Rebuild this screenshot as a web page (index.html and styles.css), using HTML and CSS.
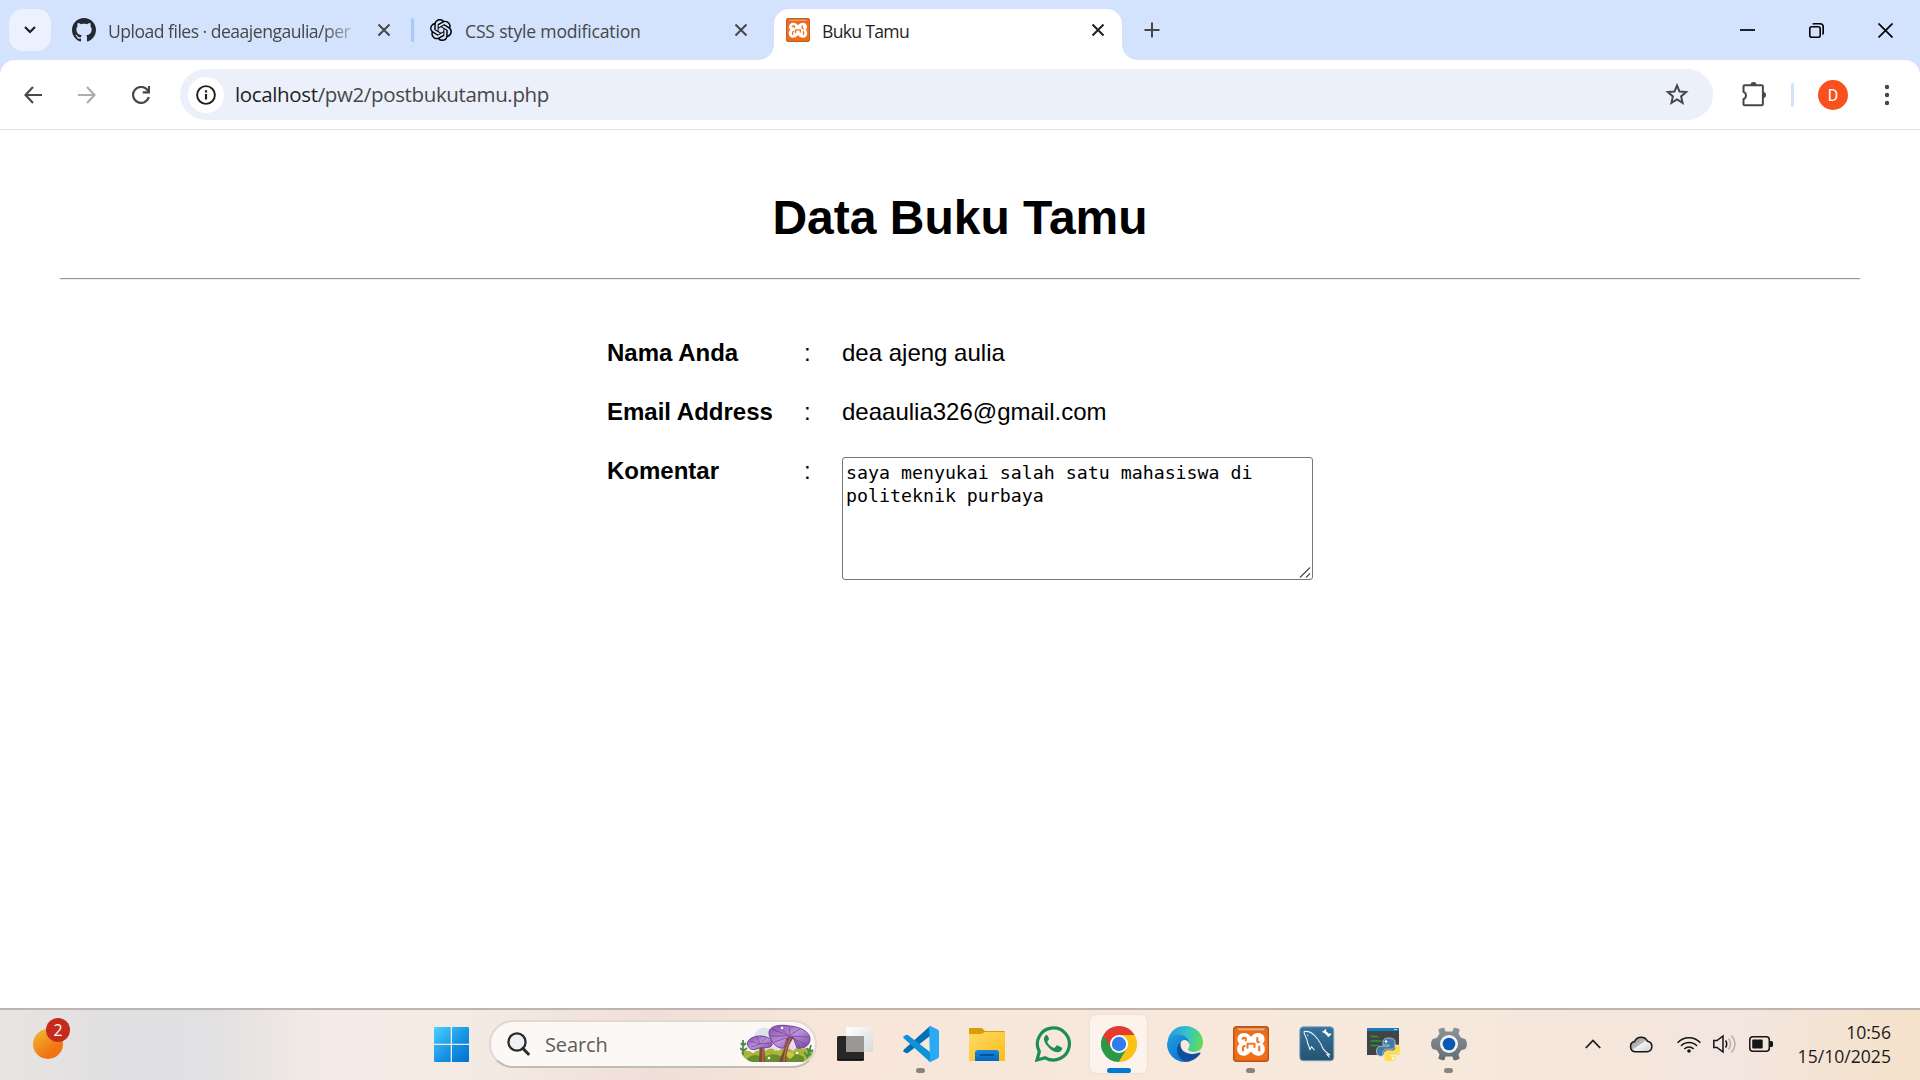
FILE: index.html
```html
<!DOCTYPE html>
<html lang="id">
<head>
<meta charset="utf-8">
<title>Buku Tamu</title>
<link rel="stylesheet" href="styles.css">
</head>
<body>
<svg width="0" height="0" class="defs" aria-hidden="true">
  <defs>
    <linearGradient id="orange" x1="0" y1="0" x2="0" y2="1"><stop offset="0" stop-color="#dc6a1c"/><stop offset=".5" stop-color="#fa7320"/><stop offset="1" stop-color="#ef6a15"/></linearGradient>
    <symbol id="xampp" viewBox="0 0 36 36">
      <rect x=".7" y=".7" width="34.6" height="34.6" rx="2.5" fill="url(#orange)" stroke="#b9541a" stroke-width="1.4"/>
      <path d="M4 2.6h28l-2 1.6H6z" fill="#f4b282"/>
      <path d="M11 7c3 0 5 1.300 7 3.800C20 8.300 22 7 25 7c4 0 6.500 2.500 6.500 6 0 2-.8 3.500-2 4.800 1.500 1.300 2.300 3 2.300 5.200 0 4-2.500 6.700-6.300 6.700-3.200 0-5.700-1.500-7.500-4.200-1.800 2.700-4.300 4.200-7.500 4.200C6.700 29.700 4.200 27 4.200 23c0-2.200.8-3.900 2.300-5.200-1.200-1.300-2-2.800-2-4.800 0-3.500 2.500-6 6.500-6z" fill="#fff"/>
      <path d="M9.500 12.800q1.300-1.600 3.200-.6v2.200M10 24.500v-2.800q0-1.700 1.700-1.700M14.500 17.800h7M21.500 17.800v3.200M24.300 12v2.700q0 1.500 1.500 1.500M26.200 20.500v4M14.500 17.800v4" fill="none" stroke="#f27421" stroke-width="2.100" stroke-linecap="round"/>
    </symbol>
    <symbol id="x" viewBox="0 0 16 16"><path d="M2.500 2.500l11 11M13.500 2.500l-11 11" fill="none" stroke="currentColor" stroke-width="2"/></symbol>
  </defs>
</svg>

<header class="tabstrip">
  <div class="tab-search"><svg width="14" height="10" viewBox="0 0 14 10"><path d="M2 2l5 5 5-5" fill="none" stroke="#1f1f1f" stroke-width="2.200"/></svg></div>
  <div class="tab tab-first">
    <svg width="24" height="24" viewBox="0 0 16 16"><path fill="#24292f" d="M8 0C3.580 0 0 3.580 0 8c0 3.540 2.290 6.530 5.470 7.590.4.070.55-.17.55-.38 0-.19-.01-.82-.01-1.490-2.010.37-2.530-.49-2.690-.94-.09-.23-.48-.94-.82-1.130-.28-.15-.68-.52-.01-.53.63-.01 1.080.58 1.230.82.72 1.210 1.870.87 2.330.66.070-.52.28-.87.51-1.070-1.780-.2-3.640-.89-3.640-3.950 0-.87.31-1.590.82-2.150-.08-.2-.36-1.020.08-2.120 0 0 .67-.21 2.200.82.64-.18 1.320-.27 2-.27s1.360.09 2 .27c1.530-1.040 2.200-.82 2.200-.82.44 1.100.16 1.920.08 2.120.51.56.82 1.270.82 2.150 0 3.070-1.870 3.750-3.650 3.950.29.25.54.73.54 1.480 0 1.070-.01 1.930-.01 2.200 0 .21.15.46.55.38A8.010 8.010 0 0 0 16 8c0-4.420-3.580-8-8-8z"/></svg>
    <span class="tab-title fade">Upload files · deaajengaulia/per</span>
    <svg class="close" width="16" height="16"><use href="#x"/></svg>
  </div>
  <i class="tab-sep"></i>
  <div class="tab tab-second">
    <svg width="22" height="22" viewBox="0 0 24 24"><path fill="#000" d="M22.282 9.821a5.985 5.985 0 0 0-.516-4.910 6.046 6.046 0 0 0-6.510-2.900A6.065 6.065 0 0 0 4.981 4.182a5.985 5.985 0 0 0-3.998 2.900 6.046 6.046 0 0 0 .743 7.097 5.980 5.980 0 0 0 .51 4.911 6.051 6.051 0 0 0 6.515 2.900A5.985 5.985 0 0 0 13.260 24a6.056 6.056 0 0 0 5.772-4.206 5.990 5.990 0 0 0 3.998-2.900 6.056 6.056 0 0 0-.748-7.073zm-9.022 12.608a4.476 4.476 0 0 1-2.876-1.041l.141-.081 4.779-2.758a.795.795 0 0 0 .392-.681v-6.737l2.020 1.169a.071.071 0 0 1 .038.052v5.583a4.504 4.504 0 0 1-4.494 4.494zM3.600 18.304a4.471 4.471 0 0 1-.535-3.014l.142.085 4.783 2.759a.771.771 0 0 0 .78 0l5.843-3.369v2.332a.08.08 0 0 1-.033.062L9.740 19.950a4.500 4.500 0 0 1-6.140-1.646zM2.340 7.896a4.485 4.485 0 0 1 2.366-1.973V11.600a.766.766 0 0 0 .388.676l5.814 3.355-2.020 1.168a.076.076 0 0 1-.071 0l-4.830-2.786A4.504 4.504 0 0 1 2.340 7.872zm16.597 3.855l-5.833-3.387L15.119 7.200a.076.076 0 0 1 .071 0l4.830 2.791a4.494 4.494 0 0 1-.676 8.105v-5.678a.79.79 0 0 0-.407-.667zm2.010-3.023l-.141-.085-4.774-2.782a.776.776 0 0 0-.785 0L9.409 9.230V6.897a.066.066 0 0 1 .028-.061l4.830-2.787a4.500 4.500 0 0 1 6.680 4.660zM8.307 12.863l-2.020-1.164a.08.08 0 0 1-.038-.057V6.075a4.500 4.500 0 0 1 7.375-3.453l-.142.080L8.704 5.460a.795.795 0 0 0-.393.681zm1.097-2.365l2.602-1.500 2.607 1.500v2.999l-2.597 1.500-2.607-1.500z"/></svg>
    <span class="tab-title">CSS style modification</span>
    <svg class="close" width="16" height="16"><use href="#x"/></svg>
  </div>
  <div class="tab tab-active">
    <svg width="24" height="24"><use href="#xampp"/></svg>
    <span class="tab-title">Buku Tamu</span>
    <svg class="close" width="16" height="16"><use href="#x"/></svg>
  </div>
  <svg class="new-tab" width="16" height="16" viewBox="0 0 16 16"><path d="M8 .5v15M.5 8h15" stroke="#474747" stroke-width="2"/></svg>
  <div class="window-controls">
    <svg width="15" height="15" viewBox="0 0 15 15"><path d="M0 7h15" stroke="#000" stroke-width="1.700"/></svg>
    <svg width="15" height="15" viewBox="0 0 15 15" fill="none" stroke="#000" stroke-width="1.600"><rect x=".8" y="3.800" width="10.400" height="10.400" rx="2"/><path d="M3.600 1.200C4 .9 4.700.8 5.500.8H11a3.200 3.200 0 0 1 3.200 3.200v5.500c0 .8-.2 1.500-.7 2"/></svg>
    <svg width="15" height="15" viewBox="0 0 15 15"><path d="M.5.5l14 14M14.500.5l-14 14" stroke="#000" stroke-width="1.700"/></svg>
  </div>
</header>

<nav class="toolbar">
  <div class="nav-buttons">
    <svg width="18" height="18" viewBox="0 0 18 18" fill="none" stroke="#474747" stroke-width="2.100"><path d="M18 9H1.500M9 1L1.500 9 9 17"/></svg>
    <svg width="18" height="18" viewBox="0 0 18 18" fill="none" stroke="#adadad" stroke-width="2.100"><path d="M0 9h16.500M9 1l7.500 8L9 17"/></svg>
    <svg width="18" height="18" viewBox="0 0 18 18" fill="none" stroke="#474747" stroke-width="2.200"><path d="M16.800 11A8 8 0 1 1 15 3.500l1.800 1.900M17 0v6.300h-6.300"/></svg>
  </div>
  <div class="omnibox">
    <span class="site-info"><svg width="20" height="20" viewBox="0 0 20 20"><circle cx="10" cy="10" r="8.900" fill="none" stroke="#1f1f1f" stroke-width="1.900"/><path d="M10 9v5.500M10 5.300v2.200" stroke="#1f1f1f" stroke-width="2.200"/></svg></span>
    <span class="url"><b>localhost</b>/pw2/postbukutamu.php</span>
    <svg width="24" height="23" viewBox="0 0 24 23"><path d="M12 2.500l2.500 6.100 6.600.5-5 4.300 1.500 6.400-5.600-3.400-5.600 3.400 1.500-6.400-5-4.300 6.600-.5z" fill="none" stroke="#474747" stroke-width="2"/></svg>
  </div>
  <svg class="ext" width="26" height="26" viewBox="0 0 26 26"><path d="M3.500 3.300h17.200a1.200 1.200 0 0 1 1.200 1.200v17.500a1.200 1.200 0 0 1-1.200 1.200H3.500a1 1 0 0 1-1-1v-5a4 4 0 0 0 0-7.400v-5.500a1 1 0 0 1 1-1z" fill="none" stroke="#474747" stroke-width="2"/><path d="M9.500 3a3 3 0 0 1 6 0zM22 10a3 3 0 0 1 0 6z" fill="#474747"/></svg>
  <i class="bar-sep"></i>
  <span class="avatar">D</span>
  <svg class="dots" width="6" height="22" viewBox="0 0 6 22" fill="#474747"><circle cx="3" cy="3" r="2.200"/><circle cx="3" cy="11" r="2.200"/><circle cx="3" cy="19" r="2.200"/></svg>
</nav>

<main class="page">
  <h1>Data Buku Tamu</h1>
  <hr>
  <div class="guest">
    <b>Nama Anda</b><span>:</span><span>dea ajeng aulia</span>
    <b>Email Address</b><span>:</span><span>deaaulia326@gmail.com</span>
    <b>Komentar</b><span>:</span>
    <div class="comment">saya menyukai salah satu mahasiswa di politeknik purbaya
      <svg class="grip" width="13" height="13" viewBox="0 0 13 13"><path d="M1 11.500L11 1.500M7 11.500l4-4" stroke="#555" stroke-width="1.300"/></svg>
    </div>
  </div>
</main>

<footer class="taskbar">
  <div class="widget"><i class="sun"></i><span class="badge">2</span></div>
  <svg class="start" width="35" height="35" viewBox="0 0 35 35">
    <defs><linearGradient id="w" gradientUnits="userSpaceOnUse" x1="0" y1="0" x2="35" y2="35"><stop offset="0" stop-color="#4bd0ff"/><stop offset=".55" stop-color="#1794e4"/><stop offset="1" stop-color="#0070d0"/></linearGradient></defs>
    <path fill="url(#w)" d="M1 0h15.700v16.700H0V1a1 1 0 0 1 1-1zM18 0h16a1 1 0 0 1 1 1v15.700H18zM0 18h16.700v17H1a1 1 0 0 1-1-1zM18 18h17v16a1 1 0 0 1-1 1H18z"/></svg>
  <div class="search">
    <svg width="23" height="24" viewBox="0 0 23 24" fill="none" stroke="#2b2b2b"><circle cx="10" cy="10" r="8.600" fill="#eef0f3" stroke-width="2.300"/><path d="M16 16.500l5.300 5.500" stroke-width="3" stroke-linecap="round"/></svg>
    <span>Search</span>
    <svg class="mushrooms" width="74" height="40" viewBox="0 0 74 40">
      <defs><linearGradient id="cap" x1="0" y1="0" x2="1" y2="1"><stop offset="0" stop-color="#7d4daa"/><stop offset=".5" stop-color="#bd92da"/><stop offset="1" stop-color="#7644a4"/></linearGradient><clipPath id="mclip"><path d="M0 0h74v26q-3 10-12 12H13Q3 36 0 26z"/></clipPath></defs>
      <path d="M14 12c2-7 9-10 15-7 5-3 12 0 12 6v18H14z" fill="#dce4e9"/>
      <path d="M24 20c10-8 28-8 36 0v12H24z" fill="#eddaf0"/>
      <g clip-path="url(#mclip)"><path d="M0 29q7-5 13 0 5-4 12-2 6-5 13 0 8-6 15 0 5-6 9-2 6-3 12 2v13H0z" fill="#a8b63a"/><path d="M6 36q8-9 17-2 10-7 19-1 10-7 22 0v8H6z" fill="#6c8d2c"/><path d="M44 30q6-5 11 1l-5 4z" fill="#d0c449"/></g>
      <path d="M19 20c1 8 0 14 0 18h6c0-8-1-13 0-19zM47 12c0 10-6 18-8 26h7c0-10 3-18 8-25z" fill="#824a31"/><path d="M23 20v18M51 13c-5 10-7 17-7 25" stroke="#b87850" stroke-width="1.200" fill="none"/>
      <path d="M8 22C5 17 12 12 20 12c8 0 13 4 12 9-2 4-8 2-12 3-5 1-9 4-12-2z" fill="url(#cap)" stroke="#76429a"/>
      <path d="M29 8C30 2 39 0 50 2c12 1 21 7 20 14-1 6-6 9-13 8l-4-11-6 1-3 10c-5 1-10-3-12-7-2-3-3-5-3-9z" fill="url(#cap)" stroke="#76429a"/>
      <path d="M49 12L32 5M49 12L30 12M49 12L39 3M49 12l1-9M49 12L60 5M49 12l20 1M49 12l17 9M54 14l6 9M46 14L34 18M20 20l-10-3M20 20l-9 3M20 20l-3-7M20 20l6-6M20 20l11-1" stroke="#5b327f" stroke-width="1" opacity=".55"/>
      <path d="M3 16v15M1 19l2 3 3-3M0 24l3 3 4-3M71 21l-4 13M67 24l2 4 4-2M64 28l3 4 4-2" stroke="#4d8850" stroke-width="1.800" fill="none"/>
      <g fill="#fff"><circle cx="42" cy="4" r="1.300"/><circle cx="29" cy="34" r="1.300"/><circle cx="57" cy="29" r="1.200"/><circle cx="35" cy="26" r=".8"/></g>
    </svg>
  </div>
  <div class="apps">
    <div class="app"><svg viewBox="0 0 36 36"><defs><linearGradient id="tv" x1="0" y1="0" x2="1" y2="1"><stop offset="0" stop-color="#fff"/><stop offset="1" stop-color="#d9d9d9"/></linearGradient></defs><rect y="10" width="27" height="25" rx="1.500" fill="#292827"/><path d="M0 33.500h27" stroke="#111"/><rect x="9" y="1" width="27" height="25" rx="1.500" fill="url(#tv)"/><path d="M9 10h18v16H9z" fill="#9a9896"/></svg></div>
    <div class="app running"><svg viewBox="0 0 36 36"><path d="M27 0L1 23.500q-1.500 1.500 0 2.500L3 27q1.200.7 2.500-.4L27 10z" fill="#0070b8"/><path d="M27 36L1 12.500Q-.5 11 1 10L3 9q1.200-.7 2.500.4L27 26z" fill="#0d92d8"/><path d="M26 .3Q26.500-.3 28 .3L34.500 3.500Q36 4.200 36 6v24q0 1.800-1.500 2.500L28 35.700q-1.500.6-2.500-.4l1.500-1z" fill="#2aaaf3"/></svg></div>
    <div class="app"><svg viewBox="0 0 36 36"><defs><linearGradient id="fo" x1="0" y1="0" x2="1" y2="1"><stop offset="0" stop-color="#ffda68"/><stop offset="1" stop-color="#fbbd17"/></linearGradient><linearGradient id="fb" x1="0" y1="0" x2="0" y2="1"><stop offset="0" stop-color="#1c86dc"/><stop offset="1" stop-color="#0069bd"/></linearGradient></defs><path d="M1 2h12l3 3h19a1 1 0 0 1 1 1v8H0V3a1 1 0 0 1 1-1z" fill="#dc9c08"/><path d="M0 8h12l4-2h19a1 1 0 0 1 1 1v27a1 1 0 0 1-1 1H1a1 1 0 0 1-1-1z" fill="url(#fo)"/><path d="M6 35v-8a3 3 0 0 1 3-3h18a3 3 0 0 1 3 3v8z" fill="url(#fb)"/><path d="M11 29h14" stroke="#064b91" stroke-width="1.700"/></svg></div>
    <div class="app"><svg viewBox="0 0 36 36"><path d="M2 34l2.300-8.400A16 16 0 1 1 10.300 31.800z" fill="none" stroke="#1e8c59" stroke-width="3.200"/><path d="M12.500 9.500c-.6-.6-1.500-.5-2 0-2.300 2.400-2 5.400 1.200 9.800 3.500 4.500 7 7 11 7 2 0 4-1.300 4.500-3.200.2-.9.1-1.400-.5-1.700l-4-1.900c-.6-.3-1-.2-1.500.5l-1.300 1.500c-.4.5-.9.5-1.500.2-2.800-1.200-4.700-3-6-5.400-.3-.5-.1-1 .3-1.400l1-1.300c.3-.4.4-.8.2-1.400z" fill="#1e8c59"/></svg></div>
    <div class="app active"><svg viewBox="0 0 36 36"><path d="M18 18h-9L2.400 9A18 18 0 0 0 18 36l8-13z" fill="#2a9846"/><path d="M18 9h15.600A18 18 0 0 0 2.400 9l7.800 13.500z" fill="#e33b2e"/><path d="M18 9h15.600A18 18 0 0 1 18 36l7.800-13.500z" fill="#fcc215"/><circle cx="18" cy="18" r="9" fill="#fff"/><circle cx="18" cy="18" r="7.200" fill="#2f7ded"/></svg></div>
    <div class="app"><svg viewBox="0 0 36 36"><defs><linearGradient id="e1" x1="0" y1=".3" x2="1" y2=".5"><stop offset="0" stop-color="#239be3"/><stop offset=".55" stop-color="#35c5c5"/><stop offset="1" stop-color="#62dc53"/></linearGradient><linearGradient id="e2" x1="0" y1="0" x2=".8" y2="1"><stop offset="0" stop-color="#249ee2"/><stop offset="1" stop-color="#0870cc"/></linearGradient></defs><path d="M1 13C4 4 10 0 18 0c11 0 18 8 18 16.500 0 6-4 9.500-9 9.500-4 0-6-1.500-6-2.700 0-1 1.500-2 1.500-4.300 0-4-4-8-10-8-5 0-9 3-11.500 7z" fill="url(#e1)"/><path d="M0 18C1 12 5 8.500 11 8.500c7 0 11.500 4.500 11.500 9.500 0 0-1-4-5-4-3.500 0-6 4-6 8.500C11.500 30 17 35 23 35c-2 .7-3.500 1-5 1C8 36 0 28 0 18z" fill="url(#e2)"/><path d="M14.500 15C12 17 10 20 10 24c0 6 5 11 11 11.600C26 35 31 31.500 33.500 27.300c.3-.6-.2-1-.8-.8C24 30 13.500 27 13.500 18.500c0-1.500.5-2.700 1-3.500z" fill="#104e9e"/></svg></div>
    <div class="app running"><svg viewBox="0 0 36 36"><use href="#xampp"/></svg></div>
    <div class="app"><svg viewBox="0 0 36 36"><defs><linearGradient id="my" x1="0" y1="0" x2="0" y2="1"><stop offset="0" stop-color="#36739f"/><stop offset="1" stop-color="#24536f"/></linearGradient></defs><rect x=".8" y=".8" width="34" height="34" rx="3.500" fill="url(#my)" stroke="#83a9bd"/><path d="M5 5.500c5-.7 9 2 11.500 5 3 3.600 5 6 6.500 10 1 2.700 2 4 4 5.500l4 3-3-.5 2.500 3M5 5.500c0 3 1.500 5 2.500 7 .8 2 .7 4 1.700 6l1.800 5 1.500-2.800 3 3.500M8 9l1.300.3" fill="none" stroke="#e9f1f5" stroke-width="1.100"/><path d="M25 5l5.500 5" stroke="#fff" stroke-width="2.400"/><path d="M26.800 3.400l-1.200 2-2 .7M28.800 10.500l1.200-1.700 2-.8" stroke="#fff" stroke-width="1.600" fill="none"/></svg></div>
    <div class="app"><svg viewBox="0 0 36 36"><path d="M2 2h32v27H2z" fill="#424344"/><path d="M2 2h32v3H2z" fill="#147ec0"/><path d="M29 3.500h3" stroke="#b9dff3"/><path d="M5.500 10.500h8M5.500 15h11M5.500 19.500h8" stroke="#31943a" stroke-width="1.300"/><path d="M24 12c-4 0-6 1.300-6 4v3h6v1.200h-8.500c-2.500 0-4 2-4 5s1.500 5 4 5H18v-3.500c0-2 1.500-3.500 3.500-3.500H27c1.700 0 3-1.300 3-3V16c0-2.700-2-4-6-4z" fill="#3e7bae" stroke="#e7e7dc" stroke-width=".7"/><path d="M30.500 19H33c2 0 2.500 2.500 2.500 5s-1 5-3 5H25v1h5.500v2.500c0 2-2.500 3.200-5.500 3.200s-6-1.200-6-3.500V28c0-2 1-3.300 3-3.300h5.500c2 0 3-1.500 3-3.200z" fill="#ffdc4b" stroke="#f2ecd2" stroke-width=".7"/><circle cx="21" cy="15.500" r="1.200" fill="#fff"/><circle cx="28" cy="32.500" r="1.200" fill="#fff"/></svg></div>
    <div class="app running"><svg viewBox="0 0 36 36"><defs><linearGradient id="ge" x1="0" y1="0" x2="0" y2="1"><stop offset="0" stop-color="#8c949a"/><stop offset="1" stop-color="#646c75"/></linearGradient></defs><path d="M14.500 5.500l-1-3.500Q11 1 7.200 3.500L8.500 7.500 6 11.800 1.700 13Q0 15.500 0 18t1.700 5L6 24.200l2.500 4.300-1.300 4Q11 35 13.500 34l1-3.500h7l1 3.500q2.500 1 6.300-1.500l-1.300-4 2.500-4.300 4.300-1.200Q36 20.500 36 18t-1.700-5L30 11.800l-2.500-4.300 1.300-4Q25 1 22.500 2l-1 3.500z" fill="url(#ge)"/><circle cx="18" cy="18" r="9" fill="#f1f3f4"/><circle cx="18" cy="18" r="6.300" fill="#0758b2"/></svg></div>
  </div>
  <div class="tray">
    <svg width="16" height="10" viewBox="0 0 16 10"><path d="M.8 9L8 1.500 15.200 9" fill="none" stroke="#1b1b1b" stroke-width="1.800"/></svg>
    <svg width="24" height="18" viewBox="0 0 24 18"><defs><linearGradient id="cl" x1="0" y1="0" x2="1" y2="1"><stop offset="0" stop-color="#888"/><stop offset=".45" stop-color="#bbb"/><stop offset=".5" stop-color="#f2f2f2"/><stop offset="1" stop-color="#cfcfcf"/></linearGradient></defs><path d="M6 16.800A5.200 5.200 0 0 1 5.500 6.600 7.200 7.200 0 0 1 18.500 6.300 5.300 5.300 0 0 1 18 16.800z" fill="url(#cl)" stroke="#151515" stroke-width="1.500"/></svg>
    <svg width="24" height="17" viewBox="0 0 24 17" fill="none" stroke="#151515" stroke-width="1.500"><path d="M.6 6.800a15.300 15.300 0 0 1 22.800 0M4 10a11 11 0 0 1 16 0M7.300 13a6.700 6.700 0 0 1 9.400 0"/><circle cx="12" cy="15" r="1.800" fill="#151515" stroke="none"/></svg>
    <svg width="24" height="20" viewBox="0 0 24 20" fill="none" stroke="#151515" stroke-width="1.500"><path d="M.8 6.500H4L10 2v16l-6-4.500H.8zM12.500 6.500q2.500 3.500 0 7"/><path d="M15.500 4.500q4 5.500 0 11M18.500 1.500q7 8.500 0 17" stroke="#b9aca6"/></svg>
    <svg width="24" height="16" viewBox="0 0 24 16"><rect x=".8" y=".8" width="19.500" height="14.400" rx="3" fill="none" stroke="#151515" stroke-width="1.500"/><rect x="3.200" y="3.500" width="10.500" height="9" rx="1" fill="#151515"/><path d="M21 5h1.500q1.500 0 1.500 1.500v3q0 1.500-1.500 1.500H21z" fill="#151515"/></svg>
    <div class="clock"><span>10:56</span><span>15/10/2025</span></div>
  </div>
</footer>
</body>
</html>
```
FILE: styles.css
```css
* { box-sizing: border-box; }
body {
  margin: 0;
  width: 1920px;
  height: 1080px;
  overflow: hidden;
  display: flex;
  flex-direction: column;
  background: #d3e2fd;
  font-family: "Open Sans", "Noto Sans", sans-serif;
}
svg { display: block; flex: none; }
.defs { position: absolute; }

/* Tab strip */
.tabstrip { display: flex; align-items: center; height: 60px; padding-left: 9px; color: #474747; }
.tab-search { width: 42px; height: 42px; border-radius: 14px; background: #ebf1fe; display: flex; align-items: center; justify-content: center; }
.tab { display: flex; align-items: center; height: 51px; }
.tab-title { flex: 1; margin-left: 12px; font-size: 17.600px; white-space: nowrap; overflow: hidden; line-height: 26px; padding-top: 2px; letter-spacing: -.2px; }
.fade { letter-spacing: -.52px; -webkit-mask-image: linear-gradient(90deg, #000 86%, transparent 102%); mask-image: linear-gradient(90deg, #000 86%, transparent 102%); }
.close { margin-left: 18px; }
.tab-first { width: 320px; margin-left: 21px; }
.tab-sep { width: 3px; height: 24px; margin-left: 19px; border-radius: 2px; background: #a8c7fa; }
.tab-second { width: 319px; margin-left: 16px; }
.tab-second .tab-title { margin-left: 13px; }
.tab-active {
  position: relative;
  width: 348px;
  margin: 9px 0 0 25px;
  padding: 0 16px 9px 12px;
  border-radius: 15px 15px 0 0;
  background: #fff;
  color: #1f1f1f;
}
.tab-active .tab-title { letter-spacing: -.7px; }
.tab-active::before, .tab-active::after { content: ""; position: absolute; bottom: 0; width: 15px; height: 15px; }
.tab-active::before { left: -15px; background: radial-gradient(circle at 0 0, transparent 14.500px, #fff 15px); }
.tab-active::after { right: -15px; background: radial-gradient(circle at 100% 0, transparent 14.500px, #fff 15px); }
.new-tab { margin-left: 22px; }
.window-controls { display: flex; gap: 54px; margin-left: auto; padding-right: 27px; }

/* Toolbar */
.toolbar { display: flex; align-items: center; height: 70px; padding: 0 30px 0 24px; background: #fff; border-bottom: 1px solid #dfe1e5; border-radius: 15px 15px 0 0; }
.nav-buttons { display: flex; gap: 36px; }
.omnibox { display: flex; align-items: center; width: 1533px; height: 51px; margin-left: 30px; padding: 0 24px 0 8px; border-radius: 26px; background: #ecf0fa; }
.site-info { width: 36px; height: 36px; border-radius: 50%; background: #fff; display: flex; align-items: center; justify-content: center; }
.url { flex: 1; margin-left: 11px; padding-bottom: 1px; font-size: 20.500px; letter-spacing: -.36px; color: #474747; }
.url b { font-weight: 400; color: #1f1f1f; }
.ext { margin-left: 28px; }
.bar-sep { width: 3px; height: 24px; margin-left: 24px; border-radius: 2px; background: #d3e2fd; }
.avatar { width: 30px; height: 30px; margin-left: 24px; border-radius: 50%; background: #f8511d; color: #fff; font: 16px/31px Roboto, sans-serif; text-align: center; }
.dots { margin-left: auto; }

/* Guest book page */
.page { flex: 1; padding: 60px 60px 0; background: #fff; color: #000; font: 24px/29px "Liberation Sans", Arial, sans-serif; }
.page h1 { margin: 0; font-size: 48px; line-height: 56px; text-align: center; }
.page hr { margin: 32px 0 0; border: 0; height: 2px; border-top: 1px solid #979797; background: #ededed; }
.guest { display: grid; grid-template-columns: 197px 37px 471px; row-gap: 30px; width: 706px; margin: 58px 0 0 547px; }
.guest > :nth-child(3n) { margin-left: 1px; }
.comment { position: relative; width: 471px; height: 123px; margin-top: 1px; padding: 3px; border: 1px solid #767676; border-radius: 3px; font: 18.250px/23px "DejaVu Sans Mono", monospace; }
.grip { position: absolute; right: 0; bottom: 0; }

/* Taskbar */
.taskbar {
  display: flex;
  align-items: center;
  height: 72px;
  padding: 0 29px 2px 33px;
  border-top: 2px solid #bfb5b0;
  background: linear-gradient(90deg, #e8e4e3 0, #e0dfe1 6%, #e1e0e2 11%, #f4ebe6 17%, #f4ebe5 24%, #f0dfd8 34%, #f7e6d9 43%, #f8e9dd 70%, #f4e6da 85%, #f3e6e1 90%, #f4e3cf 97%, #f4e1ca 100%);
}
.widget { position: relative; width: 38px; height: 50px; }
.sun { position: absolute; left: 0; top: 10px; width: 30px; height: 30px; border-radius: 50%; background: linear-gradient(145deg, #edc133, #f17311 70%); }
.badge { position: absolute; left: 13px; top: -1px; width: 24px; height: 24px; border-radius: 50%; background: #c42b1c; color: #fff; font-size: 16px; line-height: 24px; text-align: center; }
.start { margin-left: 363px; }
.search { display: flex; align-items: center; width: 328px; height: 48px; margin-left: 20px; padding: 0 1px 0 16px; border: 2px solid #e2d7d1; border-bottom-color: #c5bab4; border-radius: 24px; background: #fcf8f6; color: #5e5c5b; font-size: 20px; letter-spacing: -.1px; }
.search span { flex: 1; margin-left: 15px; }
.apps { display: flex; gap: 9px; margin-left: 9px; }
.app { position: relative; width: 57px; height: 58px; display: flex; align-items: center; justify-content: center; }
.app svg { width: 36px; height: 36px; }
.active { border-radius: 6px; background: #fcf3ed; box-shadow: 0 0 0 1px #eedfd3, 0 1px 1px #ddd0c6; }
.running::after, .active::after { content: ""; position: absolute; bottom: 0; width: 9px; height: 5px; border-radius: 3px; background: #8d837b; }
.active::after { width: 24px; background: #0078d4; }
.tray { display: flex; align-items: center; margin-left: auto; color: #1b1b1b; }
.tray svg:nth-child(2) { margin-left: 28px; }
.tray svg:nth-child(3) { margin-left: 24px; }
.tray svg:nth-child(4), .tray svg:nth-child(5) { margin-left: 12px; }
.clock { display: flex; flex-direction: column; align-items: flex-end; width: 118px; font-size: 17.600px; line-height: 24px; }
```
